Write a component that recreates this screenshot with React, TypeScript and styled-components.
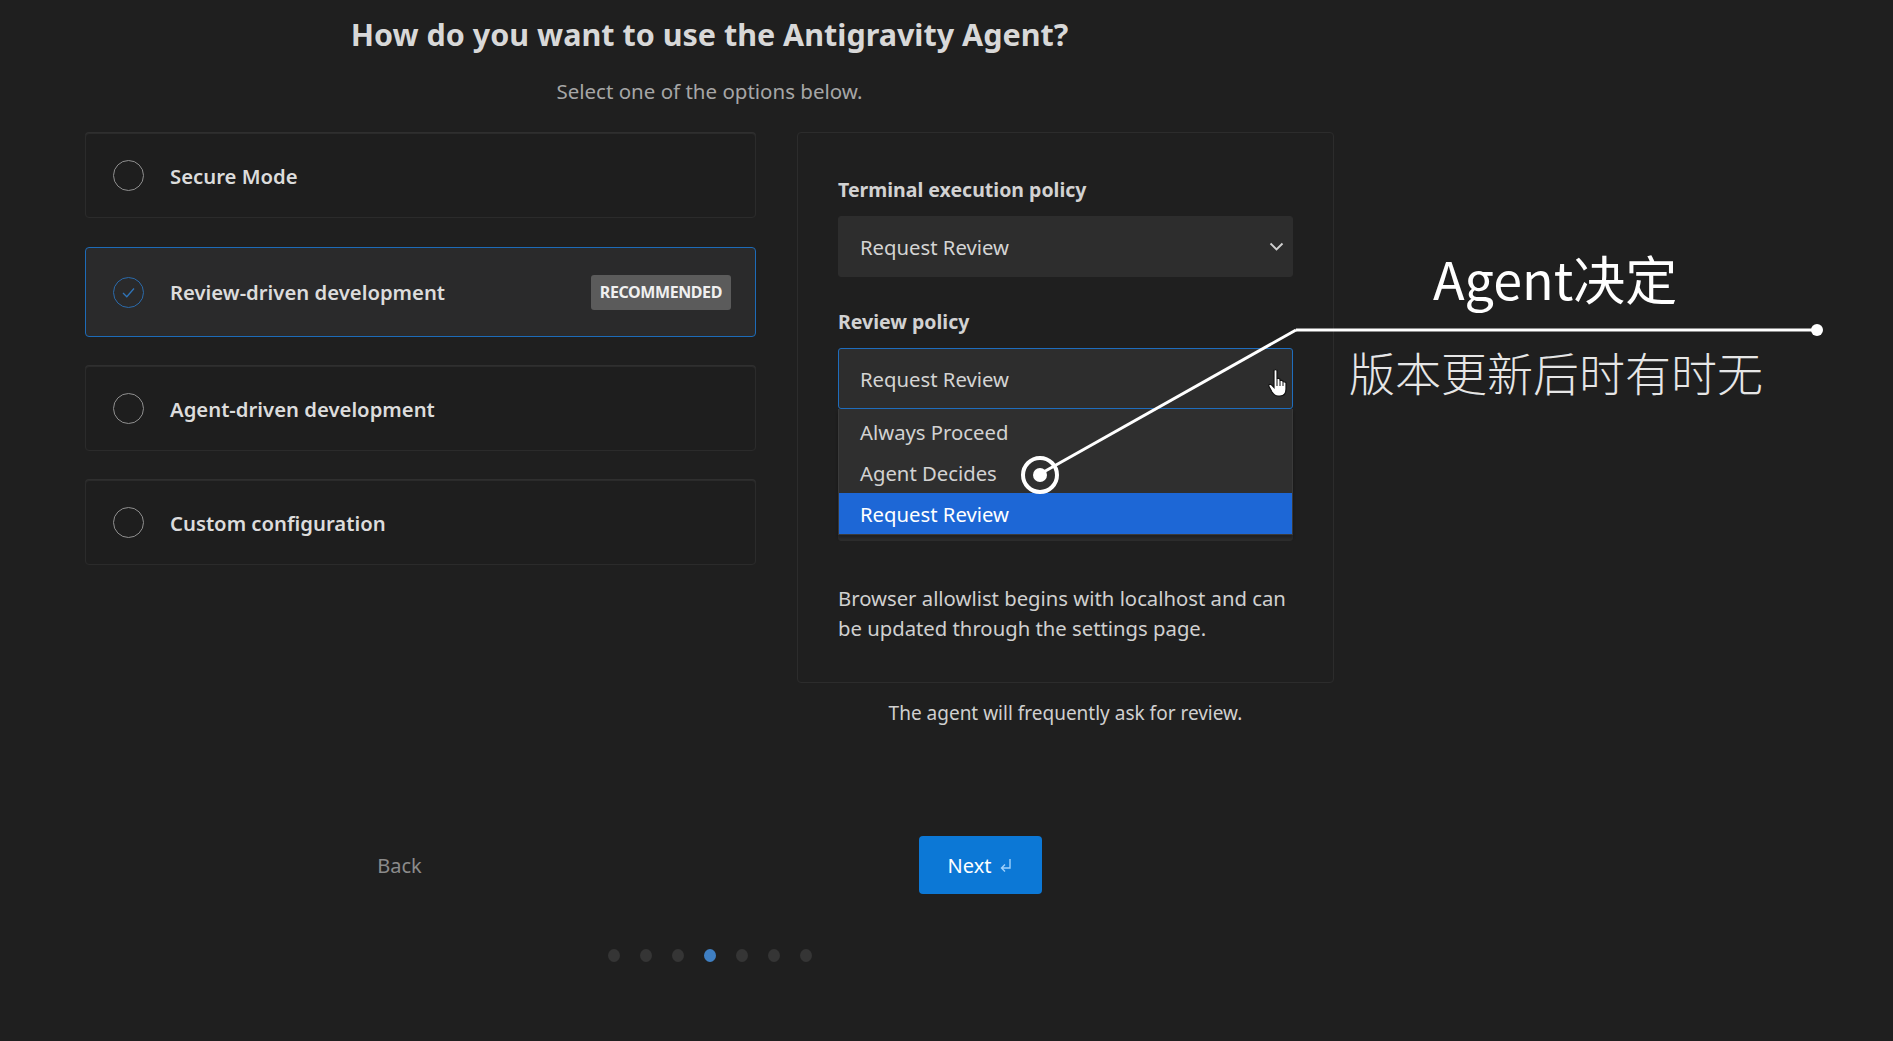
import * as React from 'react'
import styled, { createGlobalStyle } from 'styled-components'

const GlobalStyle = createGlobalStyle`
    html, body {
        margin: 0;
        padding: 0;
        background: #1f1f1f;
    }
    body {
        font-family: "Segoe UI", "Noto Sans", sans-serif;
        color: #d6d6d6;
    }
`

const options = [
    { label: 'Secure Mode' },
    { label: 'Review-driven development', selected: true, badge: 'RECOMMENDED' },
    { label: 'Agent-driven development' },
    { label: 'Custom configuration' },
]

const steps = [0, 1, 2, 3, 4, 5, 6]

const Chevron = () => (
    <svg width="15" height="10" viewBox="0 0 15 10">
        <path d="M1.5 1.5 L7.5 7.5 L13.5 1.5" fill="none" stroke="#d0d0d0" strokeWidth="1.9" />
    </svg>
)

const Check = () => (
    <svg width="15" height="13" viewBox="0 0 15 13">
        <path d="M2 7 L5.8 10.8 L13 2.5" fill="none" stroke="#2f74b8" strokeWidth="1.3" />
    </svg>
)

const EnterIcon = () => (
    <svg width="14" height="16" viewBox="0 0 14 16">
        <path d="M11 2 V11 H3 M6 7.5 L2.5 11 L6 14.5" fill="none" stroke="#9fd0fb" strokeWidth="1.4" />
    </svg>
)

const HandCursor = () => (
    <svg width="24" height="30" viewBox="0 0 24 30">
        <path
            d="M7 2.5 C7 1.2 10 1.2 10 2.5 V11 C10 10 13 10 13 11.5 V13 C13 12 16 12 16 13.5 V14.5 C16 13.5 19 13.5 19 15 V21 C19 25 17 28 13 28 H11 C8 28 6.5 26.5 5 24 L2 18.5 C1.2 17 3 15.5 4.5 16.8 L7 19.5 Z"
            fill="#ffffff"
            stroke="#111"
            strokeWidth="1.2"
        />
        <path d="M10 11 V18 M13 13 V18 M16 14.5 V18" stroke="#111" strokeWidth="1" />
    </svg>
)

export default () => {
    return (
        <Page>
            <GlobalStyle />
            <Content>
                <Title>How do you want to use the Antigravity Agent?</Title>
                <Subtitle>Select one of the options below.</Subtitle>
                <Columns>
                    <OptionList>
                        {options.map((option, index) =>
                            <OptionCard key={index} $selected={!!option.selected}>
                                <Radio $selected={!!option.selected}>
                                    {option.selected && <Check />}
                                </Radio>
                                <OptionLabel>{option.label}</OptionLabel>
                                {option.badge && <Badge>{option.badge}</Badge>}
                            </OptionCard>
                        )}
                    </OptionList>
                    <RightColumn>
                        <Panel>
                            <FieldLabel>Terminal execution policy</FieldLabel>
                            <Select>
                                <span>Request Review</span>
                                <Chevron />
                            </Select>
                            <FieldLabel>Review policy</FieldLabel>
                            <SelectWrap>
                                <Select $open>
                                    <span>Request Review</span>
                                </Select>
                                <Cursor><HandCursor /></Cursor>
                                <Dropdown>
                                    <DropItem>Always Proceed</DropItem>
                                    <DropItem>Agent Decides</DropItem>
                                    <DropItem $active>Request Review</DropItem>
                                </Dropdown>
                            </SelectWrap>
                            <HiddenField>
                                <HiddenMark />
                                <Select />
                            </HiddenField>
                            <Note>
                                Browser allowlist begins with localhost and can be updated through the settings page.
                            </Note>
                        </Panel>
                        <Caption>The agent will frequently ask for review.</Caption>
                    </RightColumn>
                </Columns>
                <Footer>
                    <BackButton>Back</BackButton>
                    <NextButton>
                        Next <EnterIcon />
                    </NextButton>
                </Footer>
                <Dots>
                    {steps.map(step =>
                        <Dot key={step} $active={step === 3} />
                    )}
                </Dots>
            </Content>

            <Overlay width="1893" height="1041" viewBox="0 0 1893 1041">
                <line x1="1040" y1="474" x2="1296" y2="330" stroke="#fff" strokeWidth="3" />
                <line x1="1296" y1="330" x2="1817" y2="330" stroke="#fff" strokeWidth="3" />
                <circle cx="1817" cy="330" r="6" fill="#fff" />
                <circle cx="1040" cy="475" r="17" fill="none" stroke="#fff" strokeWidth="4" />
                <circle cx="1040" cy="475" r="7" fill="#fff" />
            </Overlay>
            <NoteTitle>Agent决定</NoteTitle>
            <NoteSub>版本更新后时有时无</NoteSub>
        </Page>
    )
}

const Page = styled.div`
    position: relative;
    width: 1893px;
    height: 1041px;
    overflow: hidden;
    background: #1f1f1f;
`

const Content = styled.div`
    width: 1249px;
    margin-left: 85px;
    padding-top: 14px;
    display: flex;
    flex-direction: column;
`

const Title = styled.h1`
    margin: 0;
    text-align: center;
    font-size: 30.5px;
    line-height: 40px;
    font-weight: 700;
    color: #d8d8d8;
`

const Subtitle = styled.p`
    margin: 24px 0 0;
    text-align: center;
    font-size: 20.5px;
    line-height: 26px;
    color: #a6a6a6;
`

const Columns = styled.div`
    margin-top: 28px;
    display: grid;
    grid-template-columns: 671px 537px;
    column-gap: 41px;
    align-items: start;
`

const OptionList = styled.div`
    padding-top: 1px;
    display: flex;
    flex-direction: column;
    gap: 29px;
`

const OptionCard = styled.div<{ $selected: boolean }>`
    height: ${p => (p.$selected ? '90px' : '85px')};
    box-sizing: border-box;
    display: flex;
    align-items: center;
    padding: 0 24px 0 27px;
    border-radius: 4px;
    background: ${p => (p.$selected ? '#2a2a2b' : '#1e1e1e')};
    border: 1px solid ${p => (p.$selected ? '#1d6bb8' : '#2b2b2b')};
    box-shadow: ${p => (p.$selected ? 'none' : '0 -1px 0 #2f2f2f')};
`

const Radio = styled.div<{ $selected: boolean }>`
    width: 31px;
    height: 31px;
    box-sizing: border-box;
    border-radius: 50%;
    border: 1.5px solid ${p => (p.$selected ? '#2a6aaa' : '#8f8f8f')};
    display: flex;
    align-items: center;
    justify-content: center;
    flex-shrink: 0;
`

const OptionLabel = styled.span`
    margin-left: 26px;
    font-size: 20.3px;
    font-weight: 600;
    color: #dcdcdc;
    flex: 1;
`

const Badge = styled.span`
    background: #5b5b5b;
    color: #f0f0f0;
    font-size: 16px;
    font-weight: 700;
    letter-spacing: -0.4px;
    padding: 0 9px;
    height: 35px;
    line-height: 35px;
    border-radius: 3px;
`

const RightColumn = styled.div`
    display: flex;
    flex-direction: column;
`

const Panel = styled.div`
    box-sizing: border-box;
    height: 551px;
    border: 1px solid #2c2c2c;
    border-radius: 4px;
    padding: 44px 40px 0 40px;
    display: flex;
    flex-direction: column;
`

const FieldLabel = styled.div`
    font-size: 19.5px;
    line-height: 26px;
    font-weight: 700;
    color: #d2d2d2;
    margin-bottom: 13px;
    margin-top: 0;

    & + div ~ & {
        margin-top: 32px;
    }
`

const HiddenField = styled.div`
    margin-top: 32px;
    display: flex;
    flex-direction: column;
    gap: 13px;
`

const HiddenMark = styled.div`
    height: 26px;
`

const SelectWrap = styled.div`
    position: relative;
`

const Select = styled.div<{ $open?: boolean }>`
    height: 61px;
    box-sizing: border-box;
    display: flex;
    align-items: center;
    justify-content: space-between;
    padding: 0 8px 0 21px;
    background: #2d2d2d;
    border: 1px solid ${p => (p.$open ? '#1f6dbd' : '#2d2d2d')};
    border-radius: 3px;
    font-size: 20.3px;
    color: #d4d4d4;
`

const Cursor = styled.div`
    position: absolute;
    right: 2px;
    top: 20px;
`

const Dropdown = styled.div`
    position: absolute;
    left: 0;
    right: 0;
    top: 61px;
    z-index: 2;
    background: #2f2f2f;
    border: 1px solid #3a3a3a;
    border-top: none;
    padding-top: 2px;
    box-shadow: 0 3px 3px rgba(0, 0, 0, 0.3);
`

const DropItem = styled.div<{ $active?: boolean }>`
    height: 41px;
    display: flex;
    align-items: center;
    padding-left: 21px;
    font-size: 20.3px;
    color: ${p => (p.$active ? '#ffffff' : '#d2d2d2')};
    background: ${p => (p.$active ? '#1d67d6' : 'transparent')};
`

const Note = styled.p`
    margin: 42px 0 0;
    font-size: 20.3px;
    line-height: 30px;
    color: #d0d0d0;
`

const Caption = styled.p`
    margin: 17px 0 0;
    text-align: center;
    font-size: 19px;
    line-height: 26px;
    color: #d0d0d0;
`

const Footer = styled.div`
    margin-top: 110px;
    display: flex;
    align-items: center;
    padding-left: 253px;
    gap: 458px;
`

const BackButton = styled.div`
    width: 123px;
    text-align: center;
    font-size: 20px;
    color: #8b8b8b;
`

const NextButton = styled.div`
    width: 123px;
    height: 58px;
    box-sizing: border-box;
    display: flex;
    align-items: center;
    justify-content: center;
    gap: 8px;
    background: #0c78d6;
    border-radius: 4px;
    font-size: 20px;
    color: #ffffff;
`

const Dots = styled.div`
    margin-top: 55px;
    display: flex;
    justify-content: center;
    gap: 20px;
`

const Dot = styled.span<{ $active: boolean }>`
    width: 12px;
    height: 13px;
    border-radius: 50%;
    background: ${p => (p.$active ? '#3f7fc2' : '#353535')};
`

const Overlay = styled.svg`
    position: absolute;
    left: 0;
    top: 0;
    pointer-events: none;
    z-index: 3;
`

const NoteTitle = styled.div`
    position: absolute;
    left: 1433px;
    top: 244px;
    z-index: 3;
    font-family: "Noto Sans CJK SC", sans-serif;
    font-size: 52px;
    line-height: 68px;
    color: #ffffff;
`

const NoteSub = styled.div`
    position: absolute;
    left: 1349px;
    top: 341px;
    z-index: 3;
    font-family: "Noto Sans CJK SC", sans-serif;
    font-weight: 300;
    font-size: 46px;
    line-height: 60px;
    color: #e6e6e6;
`
